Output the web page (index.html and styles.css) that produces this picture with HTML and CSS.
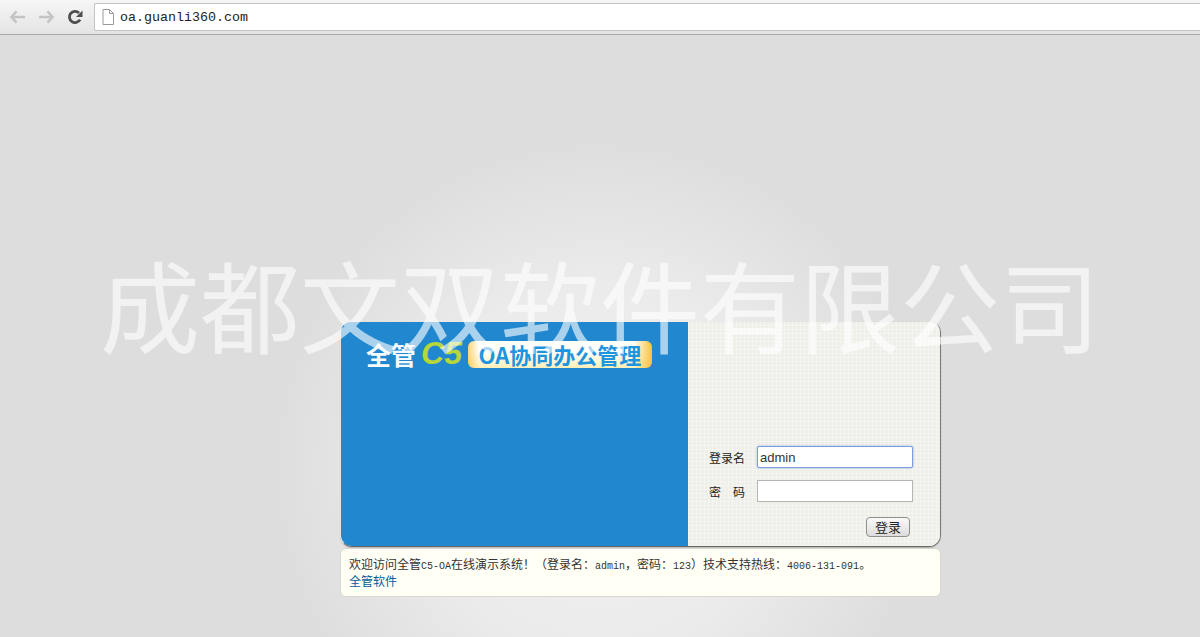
FILE: index.html
```html
<!DOCTYPE html>
<html lang="zh-CN">
<head>
    <meta charset="UTF-8">
    <title>全管C5-OA协同办公管理</title>
    <link rel="stylesheet" href="styles.css">
</head>
<body>
    <!-- Barra del navegador -->
    <div class="toolbar">
        <svg class="nav-icon" width="17" height="16" viewBox="0 0 18 16"><path d="M8 2 2.5 8 8 14M3 8h14" fill="none" stroke="#c4c4c4" stroke-width="2.6"/></svg>
        <svg class="nav-icon" width="17" height="16" viewBox="0 0 18 16"><path d="M10 2l5.5 6L10 14M15 8H1" fill="none" stroke="#c4c4c4" stroke-width="2.6"/></svg>
        <svg class="nav-icon" width="16" height="16" viewBox="0 0 16 16"><path d="M13 10.6A5.6 5.6 0 1 1 12 4" fill="none" stroke="#4e4e4e" stroke-width="2.8"/><path d="M15.5 1.5v6.6H9z" fill="#4e4e4e"/></svg>
        <div class="address">
            <svg width="12" height="16" viewBox="0 0 12 16"><path d="M1 .5h6.5l4 4v11H1zM7.5 .5v4h4" fill="#fff" stroke="#9a9a9a"/></svg>
            <span class="url">oa.guanli360.com</span>
        </div>
    </div>

    <div class="page">
        <!-- Marca de agua -->
        <div class="watermark">成都文双软件有限公司</div>

        <div class="login-box">
            <div class="login-left">
                <div class="logo">
                    <span class="logo-name">全管</span>
                    <span class="logo-c5">C5</span>
                    <span class="logo-pill">OA协同办公管理</span>
                </div>
            </div>
            <form class="login-right">
                <div class="form-row">
                    <label class="form-label">登录名</label>
                    <input class="form-input form-input-focus" type="text" value="admin">
                </div>
                <div class="form-row">
                    <label class="form-label">密　码</label>
                    <input class="form-input" type="password">
                </div>
                <div class="form-actions">
                    <button class="login-button" type="button">登录</button>
                </div>
            </form>
        </div>

        <div class="notice">
            <div class="notice-line">欢迎访问全管<span class="latin">C5-OA</span>在线演示系统！（登录名：<span class="latin">admin</span>，密码：<span class="latin">123</span>）技术支持热线：<span class="latin">4006-131-091</span>。</div>
            <a class="notice-link" href="#">全管软件</a>
        </div>
    </div>
</body>
</html>
```

FILE: styles.css
```css
html, body {
    height: 100%;
}
body {
    margin: 0;
    overflow: hidden;
    font-family: "Liberation Sans", "Noto Sans CJK SC", sans-serif;
    font-size: 12px;
    color: #222;
    background-color: #dddddd;
}
/*Barra del navegador*/
.toolbar {
    display: flex;
    align-items: center;
    gap: 12px;
    height: 35px;
    padding-left: 9px;
    box-sizing: border-box;
    border-bottom: 1px solid #a8a8a8;
    background: linear-gradient(#f6f6f6, #e4e4e4);
}
.address {
    display: flex;
    align-items: center;
    gap: 6px;
    flex: 1;
    height: 26px;
    margin-left: -1px;
    padding-left: 7px;
    border: 1px solid #c4c4c4;
    border-right: 0;
    border-radius: 2px 0 0 2px;
    background-color: #fff;
}
.url {
    font-family: "Liberation Mono", "Noto Sans CJK SC", monospace;
    font-size: 13.33px;
    color: #222;
}
/*Contenido de la pagina*/
.page {
    position: relative;
    height: 602px;
    padding: 287px 0 0 340px;
    box-sizing: border-box;
    background: radial-gradient(ellipse 330px 330px at 600px 432px, #f2f2f2 0%, #ebebeb 55%, #dddddd 100%);
}
.watermark {
    position: absolute;
    left: 100px;
    top: 208px;
    z-index: 2;
    font-family: "Noto Sans CJK SC", sans-serif;
    font-size: 100px;
    line-height: 120px;
    white-space: nowrap;
    color: rgba(255, 255, 255, 0.62);
    pointer-events: none;
}
.login-box {
    display: flex;
    width: 601px;
    height: 225px;
    box-sizing: border-box;
    overflow: hidden;
    border-left: 1px solid #e4e4e4;
    border-right: 1px solid #777;
    border-bottom: 1px solid #666;
    border-radius: 10px 10px 12px 12px;
    box-shadow: 0 1px 1px rgba(0, 0, 0, 0.2);
}
.login-left {
    flex: none;
    width: 347px;
    padding: 18px 0 0 25px;
    box-sizing: border-box;
    background-color: #2188d0;
}
.logo {
    display: flex;
    align-items: center;
    height: 27px;
    font-family: "Noto Sans CJK SC", sans-serif;
    font-weight: 700;
}
.logo-name {
    font-size: 25px;
    color: #f4fafd;
}
.logo-c5 {
    margin-left: 5px;
    font-family: "Liberation Sans", sans-serif;
    font-size: 32px;
    font-style: italic;
    color: #b6d63a;
}
.logo-pill {
    margin: 1px 0 0 6px;
    width: 184px;
    height: 27px;
    line-height: 26px;
    text-align: center;
    font-size: 22px;
    white-space: nowrap;
    color: #1f95e0;
    border-radius: 6px;
    background:
        linear-gradient(90deg, rgba(249, 194, 62, 0.7) 0%, transparent 6%, transparent 90%, #f9c23e 100%),
        linear-gradient(#fffffa 40%, #ffefb8 100%);
}
.login-right {
    flex: 1;
    display: flex;
    flex-direction: column;
    justify-content: flex-end;
    padding: 0 30px 9px 21px;
    background-color: #efefe9;
    background-image:
        repeating-linear-gradient(0deg, rgba(255, 255, 255, 0.3) 0 1px, transparent 1px 4px),
        repeating-linear-gradient(90deg, rgba(255, 255, 255, 0.3) 0 1px, transparent 1px 4px);
}
.form-row {
    display: flex;
    align-items: center;
    height: 22px;
    margin-bottom: 12px;
}
.form-label {
    width: 48px;
    font-size: 12px;
    color: #222;
}
.form-input {
    width: 156px;
    height: 22px;
    padding: 0 2px;
    box-sizing: border-box;
    font-family: "Liberation Sans", sans-serif;
    font-size: 13px;
    color: #333;
    border: 1px solid #b4b4b4;
    background-color: #fff;
    outline: none;
}
.form-input-focus {
    border: 1px solid #7a9fdc;
    border-radius: 2px;
    box-shadow: 0 0 2px #7a9fdc;
}
.form-actions {
    display: flex;
    justify-content: flex-end;
    padding: 3px 3px 0 0;
}
.login-button {
    width: 44px;
    height: 20px;
    padding: 0;
    font-family: "Noto Sans CJK SC", sans-serif;
    font-size: 13px;
    line-height: 18px;
    color: #222;
    border: 1px solid #8f8f8f;
    border-radius: 4px;
    background: linear-gradient(#fafafa, #dcdcdc);
}
.notice {
    width: 601px;
    height: 49px;
    margin-top: 1px;
    padding: 6px 8px 0;
    box-sizing: border-box;
    font-family: "Noto Sans CJK SC", sans-serif;
    font-size: 12px;
    line-height: 17px;
    color: #333;
    border: 1px solid #d8d8d0;
    border-radius: 6px;
    background-color: #fffff6;
}
.notice-line {
    height: 17px;
}
.latin {
    font-family: "Liberation Mono", monospace;
    font-size: 10px;
}
.notice-link {
    color: #0a5a9c;
    text-decoration: none;
}
```
